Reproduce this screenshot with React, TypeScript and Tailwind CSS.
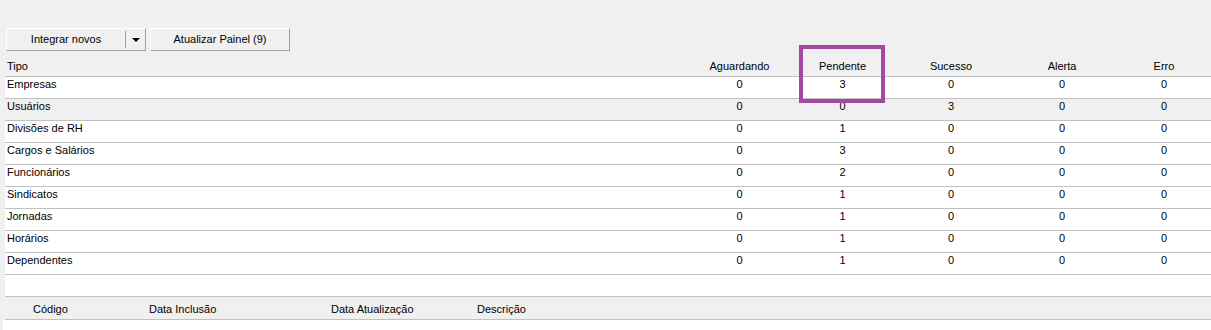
import { ReactNode } from 'react'

interface Row {
  tipo: string
  aguardando: number
  pendente: number
  sucesso: number
  alerta: number
  erro: number
}

const rows: Row[] = [
  { tipo: 'Empresas', aguardando: 0, pendente: 3, sucesso: 0, alerta: 0, erro: 0 },
  { tipo: 'Usuários', aguardando: 0, pendente: 0, sucesso: 3, alerta: 0, erro: 0 },
  { tipo: 'Divisões de RH', aguardando: 0, pendente: 1, sucesso: 0, alerta: 0, erro: 0 },
  { tipo: 'Cargos e Salários', aguardando: 0, pendente: 3, sucesso: 0, alerta: 0, erro: 0 },
  { tipo: 'Funcionários', aguardando: 0, pendente: 2, sucesso: 0, alerta: 0, erro: 0 },
  { tipo: 'Sindicatos', aguardando: 0, pendente: 1, sucesso: 0, alerta: 0, erro: 0 },
  { tipo: 'Jornadas', aguardando: 0, pendente: 1, sucesso: 0, alerta: 0, erro: 0 },
  { tipo: 'Horários', aguardando: 0, pendente: 1, sucesso: 0, alerta: 0, erro: 0 },
  { tipo: 'Dependentes', aguardando: 0, pendente: 1, sucesso: 0, alerta: 0, erro: 0 },
]

// fixed-width status columns, centered like the native list view
function Cells({ values }: { values: ReactNode[] }) {
  const widths = ['w-[101px]', 'w-[105px]', 'w-[112px]', 'w-[110px]', 'w-[94px]']
  return (
    <>
      {values.map((v, i) => (
        <div key={i} className={`${widths[i]} shrink-0 text-center`}>
          {v}
        </div>
      ))}
    </>
  )
}

export default function App() {
  return (
    <div
      className="relative w-[1211px] h-[330px] overflow-hidden bg-[#f0f0f0] text-[11px] leading-[13px] text-black"
      style={{ fontFamily: "'Liberation Sans', Arial, sans-serif" }}
    >
      {/* Toolbar buttons */}
      <div className="flex gap-[4px] pt-[28px] pl-[6px]">
        <div className="flex h-[23px] w-[140px] items-center border border-t-white border-l-white border-b-[#a0a0a0] border-r-[#a0a0a0] bg-[#f0f0f0]">
          <div className="flex-1 text-center">Integrar novos</div>
          <div className="h-[17px] w-px bg-[#a0a0a0]" />
          <div className="flex w-[19px] justify-center">
            <svg width="8" height="4" viewBox="0 0 8 4">
              <path d="M0 0 H8 L4 4 Z" fill="#000" />
            </svg>
          </div>
        </div>
        <div className="flex h-[23px] w-[140px] items-center justify-center border border-t-white border-l-white border-b-[#a0a0a0] border-r-[#a0a0a0] bg-[#f0f0f0]">
          Atualizar Painel (9)
        </div>
      </div>

      {/* List header */}
      <div className="ml-[5px] mt-[4px] flex h-[22px] items-end border-b border-[#c0c0c0] pb-[3px]">
        <div className="flex-1 pl-[2px]">Tipo</div>
        <Cells values={['Aguardando', 'Pendente', 'Sucesso', 'Alerta', 'Erro']} />
      </div>

      {/* List rows */}
      {rows.map((r, i) => (
        <div
          key={r.tipo}
          className={`ml-[5px] flex h-[22px] items-start border-b border-[#c0c0c0] pt-[1px] ${
            i === 1 ? 'bg-[#f0f0f0]' : 'bg-white'
          }`}
        >
          <div className="flex-1 pl-[2px]">{r.tipo}</div>
          <Cells values={[r.aguardando, r.pendente, r.sucesso, r.alerta, r.erro]} />
        </div>
      ))}
      <div className="ml-[5px] h-[22px] border-b border-[#c0c0c0] bg-white" />

      {/* Detail list header */}
      <div className="ml-[5px] flex h-[23px] items-center border-b border-[#c0c0c0] pt-[2px]">
        <div className="w-[144px] pl-[28px]">Código</div>
        <div className="w-[182px]">Data Inclusão</div>
        <div className="w-[146px]">Data Atualização</div>
        <div>Descrição</div>
      </div>
      <div className="ml-[3px] h-[20px] bg-white" />

      {/* Highlight annotation */}
      <div className="absolute left-[799px] top-[45px] h-[58px] w-[86px] border-[4px] border-[#a349a4]" />
    </div>
  )
}
